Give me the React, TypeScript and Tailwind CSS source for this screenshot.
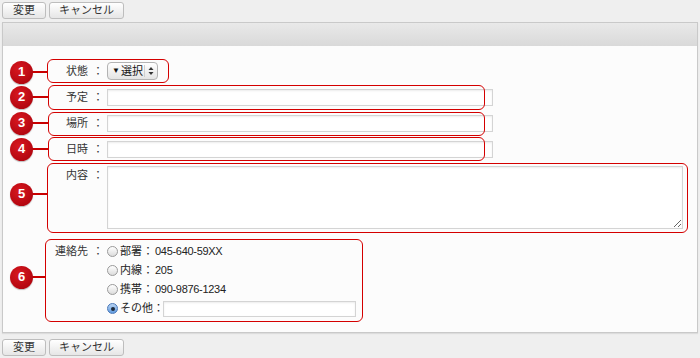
import type { ReactNode } from 'react';

type Note = {
  n: number;
  cy: number;
  box: { left: number; top: number; w: number; h: number };
};

const notes: Note[] = [
  { n: 1, cy: 72, box: { left: 47, top: 59, w: 122, h: 24 } },
  { n: 2, cy: 97, box: { left: 48, top: 85, w: 437, h: 25 } },
  { n: 3, cy: 123, box: { left: 48, top: 112, w: 437, h: 24 } },
  { n: 4, cy: 149, box: { left: 48, top: 137, w: 437, h: 24 } },
  { n: 5, cy: 194, box: { left: 47, top: 163, w: 641, h: 70 } },
  { n: 6, cy: 277, box: { left: 45, top: 239, w: 318, h: 83 } },
];

const contacts = [
  { label: '部署', value: '045-640-59XX' },
  { label: '内線', value: '205' },
  { label: '携帯', value: '090-9876-1234' },
];

const Button = ({ children, wide }: { children: ReactNode; wide?: boolean }) => (
  <button
    type="button"
    className={`h-[17px] ${wide ? 'w-[75px]' : 'w-[44px]'} rounded-[3px] border border-[#bdbdbd] bg-linear-to-b from-white to-[#e6e6e6] text-[11px] leading-none text-[#333]`}
  >
    {children}
  </button>
);

const Label = ({ text }: { text: string }) => (
  <div className="flex justify-end text-[11px] text-[#333]">
    <span>{text}</span>
    <span className="ml-[4px] w-[12px] text-center">：</span>
  </div>
);

const Radio = ({ checked }: { checked?: boolean }) =>
  checked ? (
    <span className="flex h-[11px] w-[11px] items-center justify-center rounded-full border border-[#4a78b8] bg-linear-to-b from-[#b9d4f3] to-[#5f9be0]">
      <span className="h-[4px] w-[4px] rounded-full bg-[#1d2a3a]" />
    </span>
  ) : (
    <span className="h-[11px] w-[11px] rounded-full border border-[#9a9a9a] bg-linear-to-b from-white to-[#dcdcdc]" />
  );

const TextBox = ({ className }: { className: string }) => (
  <input
    type="text"
    className={`${className} border border-[#d4d4d4] bg-white shadow-[inset_0_1px_2px_rgba(0,0,0,0.08)] outline-none`}
  />
);

export default function App() {
  return (
    <div className="relative h-[358px] w-[700px] overflow-hidden bg-[#efefef] font-['Liberation_Sans','Noto_Sans_CJK_JP',sans-serif]">
      <div className="flex gap-[3px] pl-[2px] pt-[2px]">
        <Button>変更</Button>
        <Button wide>キャンセル</Button>
      </div>

      <div className="mx-[2px] mt-[3px] border border-[#c9c9c9] shadow-[0_1px_1px_rgba(0,0,0,0.08)]">
        <div className="h-[23px] bg-linear-to-b from-[#e9e9e9] to-[#d9d9d9]" />
        <div className="bg-[#fcfcfc] pb-[14px] pt-[12px]">
          <div className="grid grid-cols-[101px_1fr] gap-x-[3px]">
            <div className="flex h-[26px] items-center justify-end">
              <Label text="状態" />
            </div>
            <div className="flex h-[26px] items-center">
              <div className="flex h-[18px] w-[51px] items-center overflow-hidden whitespace-nowrap rounded-[4px] border border-[#b3b3b3] bg-linear-to-b from-white to-[#e4e4e4] text-[11px] text-[#111]">
                <span className="flex items-center pl-[4px]">
                  <span className="mr-[1px] text-[8px]">▼</span>
                  <span>選択</span>
                </span>
                <span className="ml-auto h-[12px] border-l border-[#cfcfcf]" />
                <svg width="10" height="10" viewBox="0 0 10 10" className="mx-[1px] shrink-0">
                  <path d="M5 1 L7.5 4 H2.5 Z" fill="#333" />
                  <path d="M5 9 L7.5 6 H2.5 Z" fill="#333" />
                </svg>
              </div>
            </div>

            {['予定', '場所', '日時'].map((t) => (
              <div key={t} className="contents">
                <div className="flex h-[26px] items-center justify-end">
                  <Label text={t} />
                </div>
                <div className="flex h-[26px] items-center">
                  <TextBox className="h-[17px] w-[386px]" />
                </div>
              </div>
            ))}

            <div className="mt-[5px] leading-[16px]">
              <Label text="内容" />
            </div>
            <div className="mt-[4px] flex">
              <textarea className="h-[63px] w-[576px] border border-[#d4d4d4] bg-white shadow-[inset_0_1px_2px_rgba(0,0,0,0.08)] outline-none" />
            </div>

            <div className="mt-[13px] flex h-[19px] items-center justify-end">
              <Label text="連絡先" />
            </div>
            <div className="mt-[13px] text-[11px] text-[#222]">
              {contacts.map((c) => (
                <div key={c.label} className="flex h-[19px] items-center">
                  <Radio />
                  <span className="ml-[2px]">{c.label}</span>
                  <span className="w-[12px] text-center">：</span>
                  <span className="ml-[1px] tracking-[-0.3px]">{c.value}</span>
                </div>
              ))}
              <div className="flex h-[19px] items-center">
                <Radio checked />
                <span className="ml-[2px]">その他</span>
                <span className="w-[10px] text-center">：</span>
                <TextBox className="h-[16px] w-[193px]" />
              </div>
            </div>
          </div>
        </div>
      </div>

      <div className="mt-[6px] flex gap-[3px] pl-[2px]">
        <Button>変更</Button>
        <Button wide>キャンセル</Button>
      </div>

      {notes.map((note) => (
        <div key={note.n}>
          <div
            className="absolute rounded-[6px] border-[1.5px] border-[#d40000]"
            style={{ left: note.box.left, top: note.box.top, width: note.box.w, height: note.box.h }}
          />
          <div
            className="absolute h-[1.5px] bg-[#c80000]"
            style={{ left: 32, top: note.cy - 1, width: note.box.left - 32 }}
          />
          <div
            className="absolute flex h-[23px] w-[23px] items-center justify-center rounded-full bg-[radial-gradient(circle_at_40%_35%,#d81820,#a5000a)] text-[13px] font-bold text-white shadow-[0_1px_1px_rgba(0,0,0,0.25)]"
            style={{ left: 10, top: note.cy - 11.5 }}
          >
            {note.n}
          </div>
        </div>
      ))}
    </div>
  );
}
